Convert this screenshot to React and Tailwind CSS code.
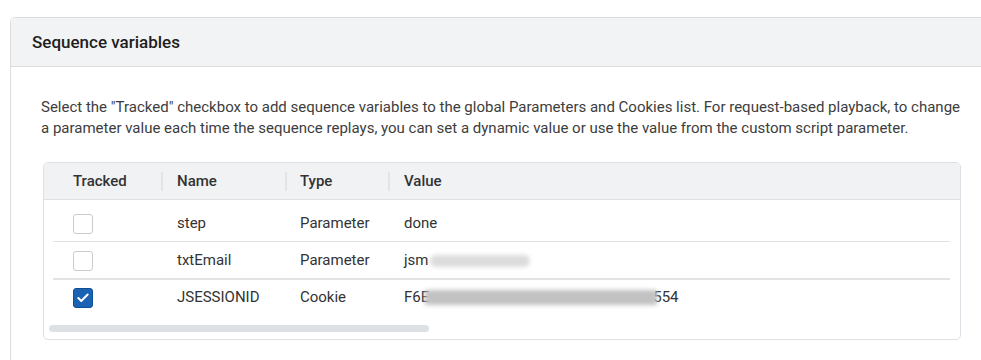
import { Check } from 'lucide-react'

const rows = [
  { tracked: false, name: 'step', type: 'Parameter', value: 'done' },
  { tracked: false, name: 'txtEmail', type: 'Parameter', value: 'email' },
  { tracked: true, name: 'JSESSIONID', type: 'Cookie', value: 'session' }
]

function Checkbox({ checked }) {
  if (checked) {
    return (
      <div className="w-[20px] h-[20px] rounded-[3px] bg-[#1a63b3] border border-[#0f4f95] flex items-center justify-center">
        <Check size={14} strokeWidth={3.5} className="text-white" />
      </div>
    )
  }
  return <div className="w-[20px] h-[20px] rounded-[3px] bg-white border border-[#c9cbce]" />
}

function ValueCell({ value }) {
  if (value === 'email') {
    return (
      <span className="flex items-center">
        <span>jsm</span>
        <span className="inline-block ml-[1px] h-[12px] w-[100px] bg-[#dcdcdc] blur-[2px] rounded-full" />
      </span>
    )
  }
  if (value === 'session') {
    return (
      <span className="flex items-center">
        <span>F6E</span>
        <span className="inline-block -ml-[4px] h-[15px] w-[232px] bg-[#c2c2c2] blur-[2px]" />
        <span className="-ml-[4px]">554</span>
      </span>
    )
  }
  return <span>{value}</span>
}

export default function App() {
  return (
    <div className="h-[360px] bg-white overflow-hidden pt-[17px] pl-[10px] font-['Roboto',sans-serif]">
      <div className="w-[990px] border border-[#dcdddf] rounded-tl-[5px]">
        {/* Header */}
        <div className="h-[49px] bg-[#f2f3f5] border-b border-[#dcdddf] flex items-center pl-[21px] rounded-tl-[5px]">
          <h2 className="text-[17px] font-medium text-[#1e1e1e] mt-[2px]">Sequence variables</h2>
        </div>

        {/* Body */}
        <div className="pt-[30px] pl-[30px] pb-[40px]">
          <p className="w-[922px] text-[15px] leading-[21px] text-[#3d3d3d]">
            Select the "Tracked" checkbox to add sequence variables to the global Parameters and Cookies list. For request-based playback, to change a parameter value each time the sequence replays, you can set a dynamic value or use the value from the custom script parameter.
          </p>

          <div className="mt-[23px] ml-[2px] w-[918px] border border-[#dde1e6] rounded-[5px] overflow-hidden">
            <div className="h-[37px] bg-[#f1f2f4] border-b border-[#dde1e6] flex items-center text-[15px] font-medium text-[#333]">
              <div className="w-[117px] pl-[29px]">Tracked</div>
              <div className="w-[2px] h-[19px] bg-[#e3e4e6]" />
              <div className="w-[122px] pl-[14px]">Name</div>
              <div className="w-[2px] h-[19px] bg-[#e3e4e6]" />
              <div className="w-[101px] pl-[13px]">Type</div>
              <div className="w-[2px] h-[19px] bg-[#e3e4e6]" />
              <div className="flex-1 pl-[14px]">Value</div>
            </div>

            <div className="pt-[5px]">
              {rows.map((row, i) => (
                <div key={row.name} className="relative h-[37px] flex items-center text-[15px] text-[#333]">
                  <div className="w-[117px] pl-[29px]">
                    <Checkbox checked={row.tracked} />
                  </div>
                  <div className="w-[2px]" />
                  <div className="w-[122px] pl-[14px]">{row.name}</div>
                  <div className="w-[2px]" />
                  <div className="w-[101px] pl-[13px]">{row.type}</div>
                  <div className="w-[2px]" />
                  <div className="flex-1 pl-[14px]">
                    <ValueCell value={row.value} />
                  </div>
                  {i === 0 && <div className="absolute left-[9px] right-[10px] bottom-0 h-[1px] bg-[#e3e3e3]" />}
                  {i === 1 && <div className="absolute left-[9px] right-[10px] -bottom-[1px] h-[2px] bg-[#e3e3e3]" />}
                </div>
              ))}
            </div>

            <div className="pt-[9px] pb-[7px] pl-[5px]">
              <div className="w-[380px] h-[7px] rounded-full bg-[#dde1e6]" />
            </div>
          </div>
        </div>
      </div>
    </div>
  )
}
